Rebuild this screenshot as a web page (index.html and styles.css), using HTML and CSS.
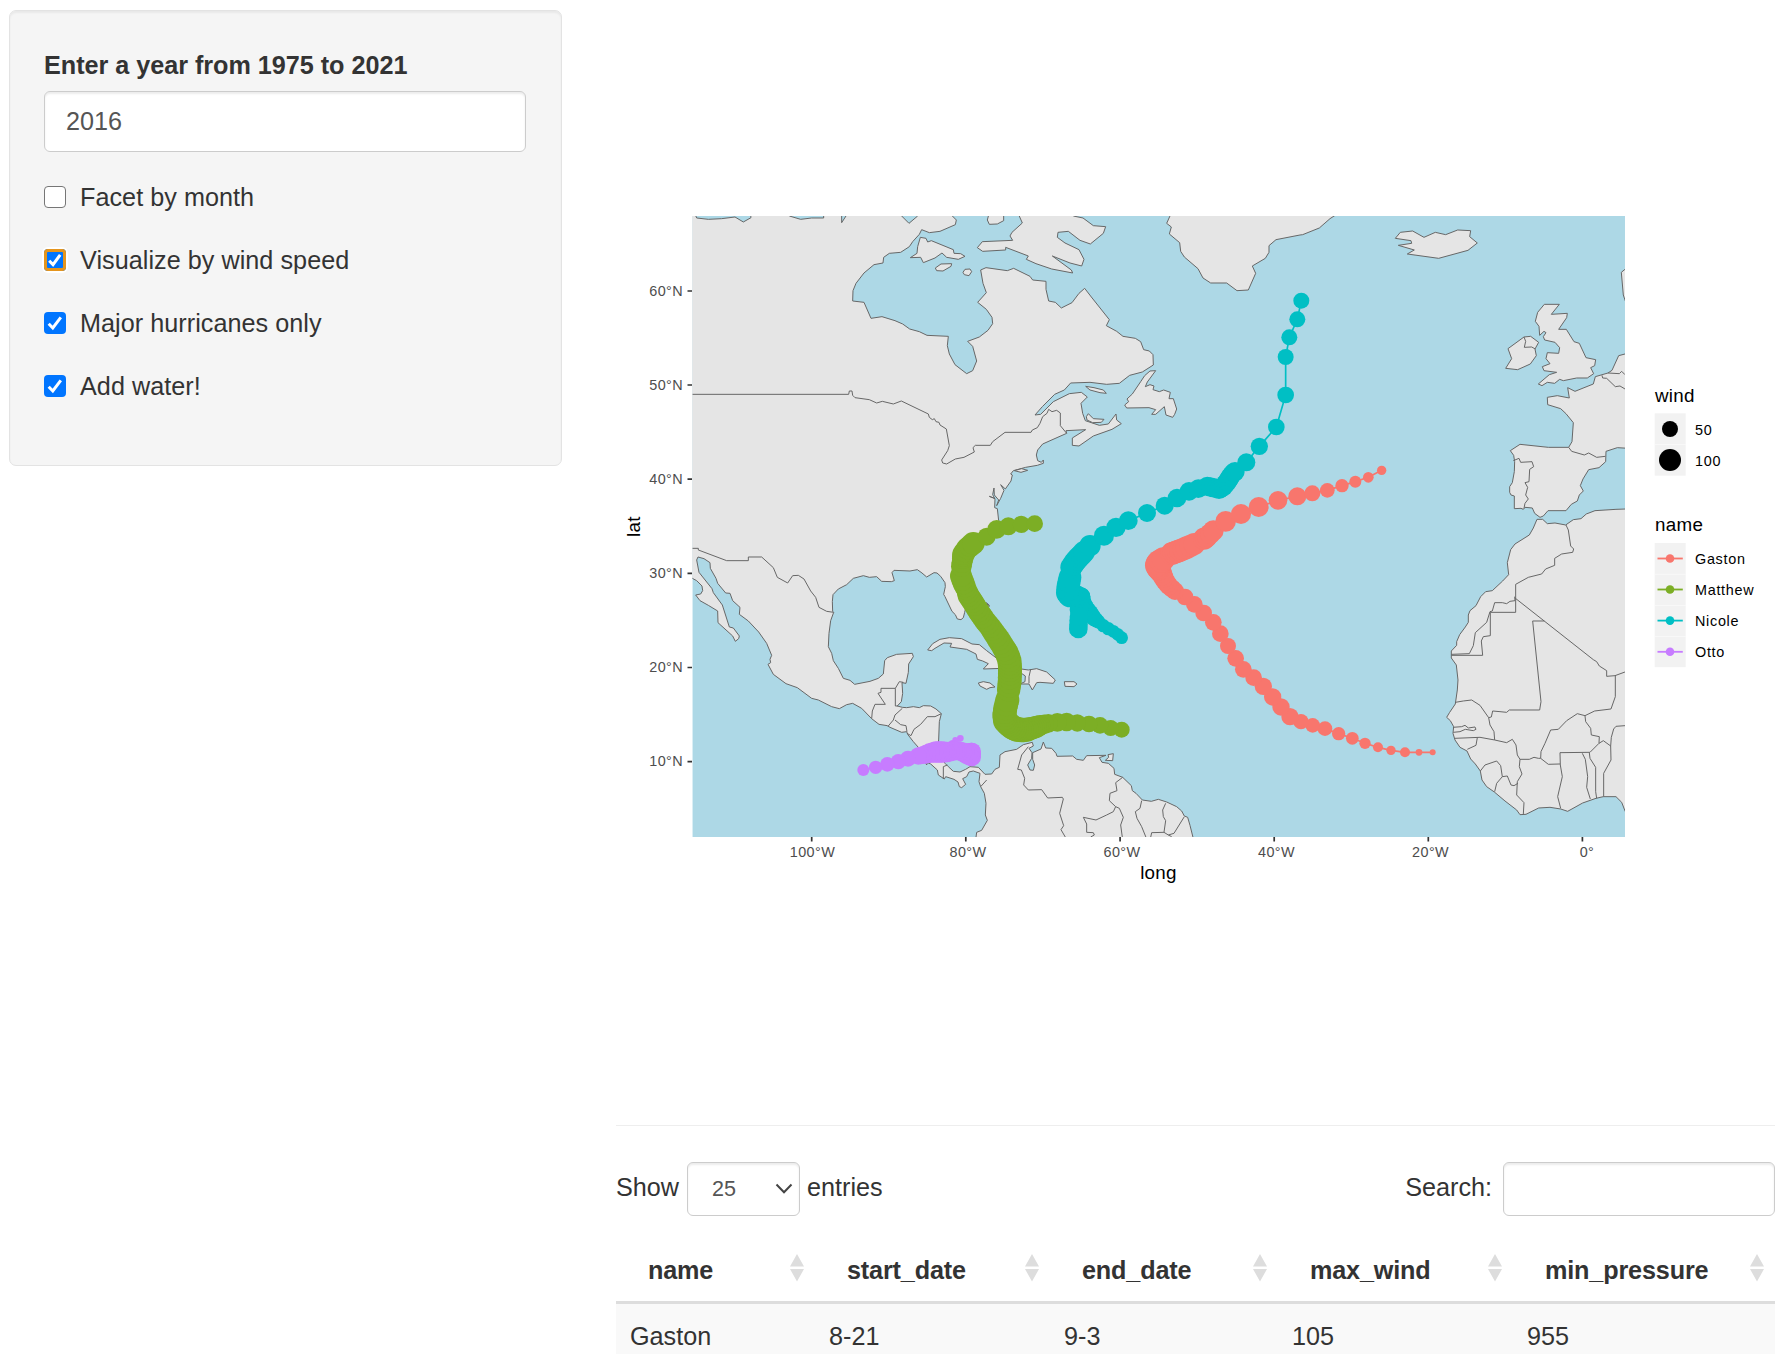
FILE: index.html
```html
<!DOCTYPE html>
<html lang="en">
<head>
<meta charset="utf-8">
<title>Atlantic storms</title>
<link rel="stylesheet" href="styles.css">
</head>
<body>
<div class="layout">
  <aside class="sidebar">
    <form class="well">
      <label class="field-label" for="year">Enter a year from 1975 to 2021</label>
      <input class="control year" id="year" type="text" value="2016">
      <label class="check"><span class="box"></span><span>Facet by month</span></label>
      <label class="check"><span class="box checked focused"><svg viewBox="0 0 22 22"><path d="M5.2 11.8 9 15.6 16.2 5.8"/></svg></span><span>Visualize by wind speed</span></label>
      <label class="check"><span class="box checked"><svg viewBox="0 0 22 22"><path d="M4.7 11.8 8.8 16 16.8 5.4"/></svg></span><span>Major hurricanes only</span></label>
      <label class="check"><span class="box checked"><svg viewBox="0 0 22 22"><path d="M4.7 11.8 8.8 16 16.8 5.4"/></svg></span><span>Add water!</span></label>
    </form>
  </aside>
  <main class="main">
    <svg class="plot" viewBox="616 10 1159 1079">
      <defs><clipPath id="panel"><rect x="37" y="48" width="2798" height="1863"/></clipPath></defs>
      <g transform="translate(680 200) scale(.33333)">
        <g clip-path="url(#panel)">
          <rect class="water" x="37" y="48" width="2798" height="1863"/>
          <g class="land">
            <!-- Americas -->
            <path d="M-30 30H40L50 54 85 58 125 56 165 51 190 66 213 53 210 30H328V48L362 58 395 54H431V30H485V68L498 48V30H665V48L687 70 713 48V30H810L817 48 829 60 826 74 780 94 748 98 725 89 718 103 698 125 688 140 662 157 628 160 611 172 609 189 582 194 552 219 528 250 519 272 518 303 552 307 573 355 606 350 645 362 668 372 689 387 718 395 741 406 805 409 802 437 808 462 825 494 860 521 878 512 890 483 878 439 863 424 898 411 924 391 938 371 936 352 919 328 893 307 919 278 909 250 902 210 918 203 982 212 1001 205 1050 229 1058 240 1098 244V268L1106 303 1126 307 1144 324 1176 308 1197 280 1214 265 1234 291 1288 359 1279 377 1310 394 1329 409 1366 415 1382 425 1391 449 1408 453 1419 464 1420 495 1387 516 1349 526 1318 550 1280 553 1230 547 1172 549 1153 570 1124 583 1087 620 1065 645 1082 643 1120 605 1168 581 1204 577 1222 591 1203 610 1208 640 1216 662 1258 676 1285 672 1308 642 1310 660 1324 671 1296 688 1240 708 1197 738 1177 736V714L1217 689 1158 692 1160 700 1088 732 1073 750 1069 765 1073 782 1084 787 1090 780V790L1072 796 1037 802 1000 812 992 822 997 825 993 843 976 867 962 854 972 871 962 895 950 917 956 900 943 885 942 864 938 884 944 895 928 889 945 896 944 923 952 926 956 962 925 1000 880 1030 845 1070 830 1120 845 1180 858 1220 854 1237 850 1253 843 1259 832 1257 826 1244 816 1234 795 1190 791 1183 796 1160 795 1148 782 1129 771 1119 762 1118 740 1131 726 1119 712 1109 690 1113 642 1111 636 1118 643 1142 634 1145 605 1144 590 1130 568 1132 550 1127 520 1135 500 1154 475 1167 459 1184 457 1205 458 1234 461 1237 452 1262 447 1300 445 1340 455 1360 460 1382 475 1405 490 1435 510 1441 524 1453 570 1444 595 1435 610 1422 614 1382 622 1373 650 1363 697 1360 700 1370 686 1392 685 1417 678 1450 666 1448 668 1480 664 1505 652 1518 667 1522 680 1523 700 1520 718 1523 730 1517 752 1518 768 1527 784 1541 778 1565 776 1620 772 1650 795 1690 805 1700 820 1714 840 1716 857 1708 870 1700 895 1702 915 1723 935 1722 945 1708 958 1702 960 1665 975 1655 1010 1648 1030 1634 1057 1627 1060 1638 1047 1645 1056 1658 1055 1675 1043 1695 1050 1710 1060 1711 1064 1695 1058 1678V1658L1083 1647 1090 1626 1097 1644 1115 1645 1128 1660 1131 1669 1178 1668 1190 1678 1210 1681 1220 1667 1278 1666 1258 1673 1266 1687 1285 1690 1302 1705 1304 1723 1328 1732 1354 1757 1357 1772 1368 1780 1387 1800 1414 1804 1435 1798 1460 1806 1490 1820 1505 1833 1513 1848 1523 1852 1530 1876 1539 1912V1950H888V1912L890 1897 905 1891 922 1861 916 1845 918 1810 913 1780 902 1760 897 1745 900 1720 880 1713 867 1716 860 1730 848 1736 857 1753 845 1763 838 1760 834 1746 822 1738 797 1730 793 1737 775 1725 772 1710 752 1692 742 1688 740 1695 725 1665 715 1642 700 1625 683 1603 680 1595 665 1597 630 1582 622 1577 597 1573 575 1556 545 1525 518 1510 500 1514 478 1526 455 1520 415 1500 395 1495 352 1463 318 1451 280 1423 264 1393 272 1388 270 1378 275 1366 260 1330 236 1296 205 1263 178 1243 180 1222 158 1202 150 1180 137 1179 113 1150 108 1135 91 1105 90 1088 72 1076 54 1071 50 1080 57 1117 96 1166 100 1178 127 1215 148 1281 160 1284 178 1308 176 1316 166 1324 158 1308 114 1268 113 1233 85 1216 60 1202 47 1185 62 1182 68 1172 66 1158 50 1142 37 1135-30 1110Z"/>
            <!-- Arctic islands and Baffin -->
            <path d="M721 112 738 115 743 126 754 122 820 149 822 160 842 161 855 169 835 178 800 172 786 159 765 174 730 188 722 172 691 173 711 160 713 140ZM783 192 815 191 813 199 789 213 770 212 766 204ZM855 208 870 207 875 215 867 227 853 224 849 217ZM930 30 922 60 928 73 952 72 971 62V30ZM1010 30 1027 69 996 97 990 108 998 121 907 125 892 143 908 154 977 150V142L1045 168 1039 178 1068 191 1115 207 1178 219 1174 210 1117 168 1170 189 1205 198 1212 178 1197 149 1155 129 1132 112 1134 97 1165 94 1200 121 1231 132 1270 100 1277 80 1240 77 1209 54 1180 48V30Z"/>
            <!-- Greenland and Iceland -->
            <path d="M1478 30 1460 70 1474 81 1468 102 1499 128 1502 154 1513 171 1554 206 1569 234 1592 249H1640L1671 272 1705 270 1727 220 1717 198 1756 175 1767 157V137L1788 119 1860 105 1868 104 1918 84 1950 56 1990 30ZM2146 115 2161 97 2198 93 2232 112 2266 97 2297 104 2333 90 2372 92 2369 110 2392 129 2364 151 2276 175 2182 162 2203 150 2155 136 2195 130 2193 122Z"/>
            <!-- Newfoundland and gulf islands -->
            <path d="M1427 512 1410 513 1394 527 1382 545 1357 582 1341 597 1346 605 1334 615 1340 624 1407 623 1427 629 1415 643 1427 643 1453 620 1458 645 1478 652 1484 643 1490 627 1480 596 1467 596 1471 577 1451 570 1438 575 1419 569 1422 558 1410 554 1396 560 1402 546ZM1217 559 1242 563 1270 570 1279 580 1260 578 1230 570ZM1225 641 1240 656 1272 658 1264 667 1238 668 1221 660 1219 650ZM1003 812 1025 806 1043 811 1023 817Z"/>
            <!-- Caribbean -->
            <path d="M743 1350 758 1331 780 1318 808 1313 845 1316 876 1332 898 1334 920 1352 945 1371 965 1387 970 1405 910 1407 925 1391 908 1383 892 1378 888 1362 860 1348 810 1341 815 1330 792 1329 765 1345 755 1352ZM895 1449 910 1445 930 1449 945 1461 930 1463 920 1468 900 1458ZM1010 1405 1045 1410 1070 1406 1100 1416 1126 1440 1120 1450 1080 1447 1070 1448 1057 1470 1047 1452 1020 1452 1035 1445 1036 1428 1020 1417ZM1153 1445H1182L1191 1452 1182 1460 1155 1459ZM1300 1661 1298 1682 1276 1681 1286 1672 1284 1664ZM919 1208 928 1216 927 1220Z"/>
            <!-- Europe -->
            <path d="M2593 313H2638L2614 343 2662 340 2660 353 2636 388H2659L2682 425 2698 430 2718 473 2747 479 2744 497 2732 503 2741 521 2722 534 2690 534 2650 542 2639 538 2624 550 2602 547 2586 557 2575 552 2608 524 2630 517 2592 512 2587 500 2610 491 2598 476 2602 458 2636 460 2639 443 2625 427 2594 420 2590 410 2598 398 2592 394 2579 406 2577 379 2566 364 2573 337ZM2532 411 2552 409 2576 427 2565 447 2569 467 2551 492 2513 509 2477 505 2495 476 2484 446ZM2850 195 2835 208 2824 217 2830 285 2845 330H2890V195Z"/>
            <path d="M2860 455 2835 462 2816 467 2796 511 2784 519 2746 530 2740 552 2685 574 2663 563 2668 594 2632 587 2602 592 2603 614 2642 626 2658 641 2680 668 2676 725 2666 742 2605 742 2520 733 2491 752 2501 766 2504 785 2503 815 2497 848 2489 860V877L2493 885 2503 888V926L2523 925 2530 928 2535 922 2557 924 2564 940 2580 952 2590 948 2604 932 2658 932 2674 913 2692 903 2698 885 2710 873 2701 857 2709 837 2726 809 2757 803 2777 785 2778 754 2812 743 2880 747V455Z"/>
            <!-- Africa -->
            <path d="M2870 926 2808 928 2745 932 2719 942 2703 956 2680 959 2657 975 2625 969 2602 971 2588 958H2571L2560 984 2548 1005 2505 1032 2492 1049 2482 1088 2486 1124 2468 1143 2437 1172 2417 1175 2402 1190 2388 1217 2370 1232 2365 1245 2365 1267 2356 1281 2339 1304 2330 1325 2330 1336 2314 1353 2314 1374 2329 1395 2334 1440 2332 1470 2326 1512 2309 1537 2300 1552 2311 1562 2321 1580 2319 1600 2325 1620 2340 1642 2361 1653 2372 1677 2386 1692 2401 1713 2406 1740 2420 1760 2443 1776 2475 1803 2510 1830 2520 1844 2538 1843 2576 1824 2610 1822 2642 1827 2663 1834 2708 1809 2748 1795 2770 1790H2808L2825 1807 2836 1835 2880 1860V926Z"/>
            <!-- Borders -->
            <g class="border">
              <path d="M37 583H506L508 573H516L518 586 525 593 568 599 590 609 607 604 640 612 664 603 745 642 748 652 757 659 763 656 768 665 777 667 780 675 799 687 808 737 803 752 785 780 788 789 800 792 826 777 852 772 883 756 879 743 886 736H931L938 725 975 697H1053L1057 690 1072 683 1080 670 1088 650 1101 640 1106 628 1116 635 1130 631 1141 639V677L1160 700M37 1045H55V1050L140 1082H205V1071H245L280 1103 292 1132 323 1149 338 1127 355 1126 372 1137 392 1173 407 1192 417 1222 440 1234 461 1237"/>
              <path d="M575 1556 577 1533 585 1513H616L594 1480 603 1477V1465H646V1518H654M646 1465 658 1445 670 1447M667 1525 645 1545 640 1560 624 1579M645 1560 662 1574 678 1577 681 1595M681 1600 693 1607 702 1588 722 1573 742 1550 765 1550 784 1541M790 1737V1700L802 1695M902 1760 920 1740M1045 1640 1025 1665 1013 1708 1024 1710 1034 1735 1031 1755 1045 1770 1085 1769 1103 1794 1147 1792 1150 1797 1139 1840 1151 1877 1143 1889 1157 1913M1328 1732 1307 1748 1311 1772 1290 1780 1288 1802 1307 1820 1300 1835 1280 1845 1248 1860 1210 1852 1220 1872V1897L1240 1898 1243 1905 1232 1911M1307 1820 1318 1825 1330 1852 1322 1875 1327 1912M1385 1802 1380 1825 1366 1835 1371 1855 1385 1880 1398 1912M1457 1810 1448 1830 1450 1850 1457 1862 1452 1897 1465 1905 1482 1900 1513 1850M1452 1897 1415 1898 1412 1912M1465 1905 1475 1910M1052 1408 1047 1430 1047 1450"/>
              <path d="M2532 411 2537 424 2533 442 2555 441 2566 447M2784 519 2818 521 2825 514 2835 524M2766 526 2768 534 2780 535 2806 560 2820 558 2835 567M2666 742 2675 754 2713 765 2726 759 2750 772 2776 769M2500 782 2517 775 2522 787 2556 785 2561 800 2549 808 2547 845 2535 848 2543 862 2537 885 2545 897 2535 910 2532 925M2658 975 2665 990 2672 1038 2681 1047 2678 1057 2645 1062 2624 1075 2624 1096 2597 1107 2585 1122 2545 1132 2507 1153V1237H2431V1307L2410 1310 2404 1323 2408 1366H2314M2314 1363 2368 1361 2380 1337 2386 1298 2420 1267 2430 1235 2437 1233 2444 1208H2467L2480 1211 2490 1204 2505 1202 2504 1190M2505 1194 2740 1379 2750 1385 2758 1398 2780 1412V1429L2805 1427 2835 1416M2593 1263H2558L2583 1505 2579 1530H2488L2480 1537 2460 1535 2438 1533 2434 1551 2426 1553 2400 1516 2375 1500 2350 1503 2326 1507M2806 1427V1490L2793 1527 2744 1533 2715 1547 2692 1541 2660 1562 2635 1588 2612 1590 2595 1630 2583 1655 2582 1675 2605 1693 2640 1692M2715 1547 2717 1565 2732 1585 2734 1605 2758 1610 2757 1630 2770 1622 2792 1638 2794 1612 2801 1587 2808 1579 2835 1577M2757 1630 2730 1657 2640 1658 2641 1695 2647 1730 2633 1790 2642 1825M2707 1660 2716 1678 2723 1730 2720 1762 2731 1797M2728 1658 2730 1675 2747 1702V1775L2750 1795M2792 1638 2793 1680 2771 1720V1790M2426 1553 2430 1575 2442 1595 2444 1620 2480 1628 2497 1618 2508 1635 2512 1665 2520 1678 2548 1678 2562 1672 2575 1675 2582 1675M2520 1678 2518 1700 2526 1722 2512 1745 2510 1785 2532 1808 2530 1843M2444 1620 2400 1612 2325 1615M2392 1613 2388 1636 2362 1648M2401 1713 2415 1695 2450 1683 2462 1697 2467 1730 2482 1728 2493 1755 2502 1757 2514 1750M2467 1730 2450 1750 2444 1775M2319 1582 2345 1580 2355 1576 2365 1584 2385 1581 2388 1588 2380 1592 2356 1588 2340 1595 2320 1597"/>
            </g>
          </g>
          <g id="tracks"></g>
        </g>
      </g>
      <g class="tick">
        <path d="M687.500 291H692M687.500 385H692M687.500 479.200H692M687.500 573.300H692M687.500 667.500H692M687.500 761.600H692M811.700 837V841.500M965.800 837V841.500M1120.100 837V841.500M1274.200 837V841.500M1428.300 837V841.500M1582.400 837V841.500"/>
      </g>
      <g class="tick-label end">
        <text x="683" y="296">60°N</text><text x="683" y="390">50°N</text><text x="683" y="484">40°N</text><text x="683" y="578">30°N</text><text x="683" y="672">20°N</text><text x="683" y="766">10°N</text>
      </g>
      <g class="tick-label middle">
        <text x="812.500" y="856.500">100°W</text><text x="968" y="856.500">80°W</text><text x="1122" y="856.500">60°W</text><text x="1276.500" y="856.500">40°W</text><text x="1430.600" y="856.500">20°W</text><text x="1587" y="856.500">0°</text>
      </g>
      <text class="axis-title middle" x="1158.500" y="879">long</text>
      <text class="axis-title middle" transform="translate(639.500 526.500) rotate(-90)">lat</text>
      <g class="legend">
        <text class="axis-title" x="1655" y="401.500">wind</text>
        <rect x="1654.700" y="413.300" width="31" height="62.400"/>
        <path class="key-gap" d="M1654.700 444.500h31"/>
        <circle cx="1670" cy="429" r="8"/><circle cx="1670" cy="460" r="11"/>
        <g class="legend-label"><text x="1695" y="434.500">50</text><text x="1695" y="465.500">100</text></g>
        <text class="axis-title" x="1655" y="530.500">name</text>
        <rect x="1654.700" y="543" width="31" height="124.200"/>
        <path class="key-gap" d="M1654.700 574.300h31M1654.700 605.400h31M1654.700 636.500h31"/>
        <g class="gaston"><path d="M1657.500 558.500h25.300"/><circle cx="1670" cy="558.500" r="4.300"/></g>
        <g class="matthew"><path d="M1657.500 589.500h25.300"/><circle cx="1670" cy="589.500" r="4.300"/></g>
        <g class="nicole"><path d="M1657.500 620.600h25.300"/><circle cx="1670" cy="620.600" r="4.300"/></g>
        <g class="otto"><path d="M1657.500 651.800h25.300"/><circle cx="1670" cy="651.800" r="4.300"/></g>
        <g class="legend-label"><text x="1695" y="563.500">Gaston</text><text x="1695" y="594.500">Matthew</text><text x="1695" y="625.500">Nicole</text><text x="1695" y="656.500">Otto</text></g>
      </g>
    </svg>
    <hr class="rule">
    <div class="toolbar">
      <div class="length"><span>Show</span><span class="control select"><span>25</span><svg viewBox="0 0 18 11"><path d="M1.500 1.500 9 9.300 16.500 1.500"/></svg></span><span>entries</span></div>
      <label class="search"><span>Search:</span><input class="control" type="text"></label>
    </div>
    <table class="data">
      <colgroup><col class="c1"><col class="c2"><col class="c3"><col class="c4"><col class="c5"></colgroup>
      <thead><tr>
        <th><div>name<svg viewBox="0 0 14 28"><path d="M7 0 14 12.500H0ZM0 15H14L7 27.500Z"/></svg></div></th>
        <th><div>start_date<svg viewBox="0 0 14 28"><path d="M7 0 14 12.500H0ZM0 15H14L7 27.500Z"/></svg></div></th>
        <th><div>end_date<svg viewBox="0 0 14 28"><path d="M7 0 14 12.500H0ZM0 15H14L7 27.500Z"/></svg></div></th>
        <th><div>max_wind<svg viewBox="0 0 14 28"><path d="M7 0 14 12.500H0ZM0 15H14L7 27.500Z"/></svg></div></th>
        <th><div>min_pressure<svg viewBox="0 0 14 28"><path d="M7 0 14 12.500H0ZM0 15H14L7 27.500Z"/></svg></div></th>
      </tr></thead>
      <tbody><tr><td>Gaston</td><td>8-21</td><td>9-3</td><td>105</td><td>955</td></tr></tbody>
    </table>
  </main>
</div>
<script src="tracks.js"></script>
</body>
</html>
```
FILE: styles.css
```css
* { box-sizing: border-box; }
body { margin: 0; height: 1354px; overflow: hidden; background: #fff; color: #333; font: 25.2px/36px "Liberation Sans", Arial, sans-serif; }
.layout { display: flex; gap: 54px; padding: 10px 13px 0 9px; }
.sidebar { width: 553px; flex: none; }
.well { height: 456px; padding: 36px 34px; background: #f5f5f5; border: 1.500px solid #e3e3e3; border-radius: 7px; box-shadow: inset 0 2px 2px rgba(0,0,0,.05); }
.field-label { display: block; font-weight: 700; margin-bottom: 8px; white-space: nowrap; letter-spacing: -.02px; }
.control { display: block; height: 54px; background: #fff; border: 1.500px solid #ccc; border-radius: 6px; box-shadow: inset 0 2px 2px rgba(0,0,0,.075); color: #555; font: inherit; }
.year { width: 482px; height: 61px; padding: 0 21px; margin-bottom: 27px; }
.check { display: flex; align-items: center; gap: 14px; height: 36px; margin-bottom: 27px; letter-spacing: .04px; }
.box { width: 22px; height: 22px; flex: none; border: 1.500px solid #767676; border-radius: 4px; background: #fff; }
.checked { border: 0; background: #0075ff; }
.checked svg { display: block; width: 22px; height: 22px; fill: none; stroke: #fff; stroke-width: 3; }
.focused { box-shadow: inset 0 0 0 3px #e5951d, 0 0 0 2px #fff; }
.main { width: 1159px; flex: none; }
.plot { display: block; width: 1159px; height: 1079px; font-family: "Liberation Sans", Arial, sans-serif; }
.water { fill: #add8e6; }
.land { fill: #e5e5e5; stroke: #666; stroke-width: 3; stroke-linejoin: round; }
.border { fill: none; }
.tick { stroke: #333; stroke-width: 1.700; }
.tick-label { fill: #4d4d4d; font-size: 14.400px; letter-spacing: .4px; }
.end { text-anchor: end; }
.middle { text-anchor: middle; }
.axis-title { font-size: 18.800px; letter-spacing: .3px; fill: #000; }
.legend rect { fill: #f2f2f2; }
.legend-label { font-size: 14.400px; letter-spacing: .7px; }
.key-gap { stroke: #fff; stroke-width: .5; }
.gaston { fill: #f8766d; stroke: #f8766d; }
.matthew { fill: #7cae25; stroke: #7cae25; }
.nicole { fill: #00bfc4; stroke: #00bfc4; }
.otto { fill: #c77cff; stroke: #c77cff; }
.legend g path { stroke-width: 1.800; }
.legend circle, #tracks circle { stroke: none; }
#tracks polyline { fill: none; stroke-width: 5; }
.rule { margin: 36px 0 0; border: 0; border-top: 1.500px solid #eee; }
.toolbar { display: flex; justify-content: space-between; margin-top: 36px; height: 54px; }
.length, .search { display: flex; line-height: 51px; }
.select { display: flex; justify-content: space-between; align-items: center; width: 113px; margin: 0 7px 0 8px; padding: 0 6px 1px 24px; font-size: 21.600px; }
.select svg { width: 18px; height: 11px; fill: none; stroke: #444; stroke-width: 2; }
.search .control { width: 272px; margin-left: 11px; }
.data { width: 1159px; margin-top: 27px; border-collapse: separate; border-spacing: 0; table-layout: fixed; }
.c1 { width: 199px; }
.c2, .c4 { width: 235px; }
.c3 { width: 228px; }
.c5 { width: 262px; }
th { height: 61px; padding: 0 11px 5px 32px; border-bottom: 3px solid #ddd; text-align: left; letter-spacing: -.15px; }
th div { display: flex; justify-content: space-between; align-items: center; }
th svg { width: 14px; height: 28px; fill: #ddd; margin-top: -4px; }
td { height: 64px; padding: 0 14px; background: #f9f9f9; }
```
FILE: tracks.js
```js
// Each storm is a list of x, y, radius triples in panel units.
const storms = {
  gaston: [2258,1657,9, 2217,1657,10, 2175,1657,15, 2133,1651,14, 2094,1642,15, 2055,1630,17, 2017,1615,19, 1976,1601,20, 1935,1586,22, 1898,1576,22, 1863,1565,23, 1830,1550,26, 1803,1521,26, 1778,1491,26, 1750,1459,26, 1721,1433,25, 1690,1408,25, 1667,1375,25, 1644,1338,24, 1621,1301,25, 1600,1267,25, 1571,1239,25, 1543,1213,25, 1515,1191,25, 1485,1173,27, 1467,1158,28, 1455,1142,29, 1447,1125,31, 1436,1106,35, 1433,1096,38, 1436,1088,37, 1450,1077,35, 1475,1061,34, 1488,1056,34, 1502,1051,34, 1520,1043,34, 1543,1032,33, 1572,1016,33, 1582,1010,31, 1600,992,31, 1637,964,31, 1683,942,30, 1736,921,30, 1794,901,28, 1852,889,27, 1897,880,24, 1942,871,22, 1986,857,20, 2026,845,18, 2065,832,16, 2105,811,14],
  matthew: [1325,1589,24, 1292,1584,24, 1260,1576,25, 1227,1572,25, 1192,1569,26, 1160,1566,28, 1132,1567,28, 1105,1570,28, 1080,1576,31, 1068,1581,33, 1055,1585,34, 1040,1589,36, 1025,1590,37, 1010,1588,37, 997,1582,37, 985,1572,37, 976,1562,37, 973,1545,36, 976,1525,36, 982,1500,36, 986,1470,35, 989,1445,36, 990,1420,36, 990,1400,36, 988,1380,36, 980,1358,36, 968,1338,35, 955,1317,35, 942,1298,34, 930,1280,33, 915,1262,33, 901,1242,33, 890,1225,33, 878,1205,33, 866,1187,33, 860,1170,31, 851,1150,33, 843,1128,33, 844,1100,31, 848,1075,32, 850,1062,33, 862,1045,33, 880,1030,34, 920,1010,27, 950,988,28, 985,979,27, 1024,973,26, 1064,971,25],
  nicole: [1325,1313,19, 1313,1303,19, 1300,1294,19, 1285,1286,20, 1270,1277,20, 1255,1265,21, 1242,1255,24, 1230,1240,26, 1218,1225,26, 1208,1210,27, 1203,1190,28, 1203,1205,28, 1197,1230,28, 1196,1262,28, 1195,1287,28, 1197,1250,28, 1203,1190,28, 1180,1185,34, 1170,1187,35, 1163,1178,35, 1165,1157,35, 1170,1132,34, 1174,1102,33, 1185,1085,33, 1197,1072,33, 1212,1056,33, 1230,1037,32, 1272,1007,30, 1308,982,29, 1345,962,28, 1401,939,27, 1454,917,27, 1491,894,28, 1527,874,28, 1555,866,28, 1582,859,29, 1600,863,29, 1617,868,29, 1630,860,29, 1642,845,29, 1650,832,29, 1658,820,28, 1665,815,29, 1699,787,27, 1738,739,26, 1789,681,25, 1817,585,25, 1817,471,24, 1828,412,24, 1852,358,24, 1864,302,24],
  otto: [841,1615,10, 826,1620,9, 818,1632,12, 835,1650,26, 858,1659,28, 873,1655,27, 876,1655,27, 875,1671,28, 862,1662,31, 848,1656,29, 832,1651,28, 820,1653,29, 800,1656,31, 785,1656,32, 768,1656,32, 750,1659,30, 730,1665,27, 715,1668,26, 684,1676,24, 655,1685,23, 622,1693,22, 587,1702,20, 550,1710,18]
};
const ns = "http://www.w3.org/2000/svg";
const host = document.getElementById("tracks");
function addDot(group, x, y, r) {
  const dot = document.createElementNS(ns, "circle");
  dot.setAttribute("cx", x);
  dot.setAttribute("cy", y);
  dot.setAttribute("r", r);
  group.append(dot);
}
for (const [name, data] of Object.entries(storms)) {
  const group = document.createElementNS(ns, "g");
  const line = document.createElementNS(ns, "polyline");
  const points = [];
  group.setAttribute("class", name);
  group.append(line);
  for (let i = 0; i < data.length; i += 3) {
    const [x, y, r, x2, y2, r2] = data.slice(i, i + 6);
    points.push(x + "," + y);
    addDot(group, x, y, r);
    // Slow-moving stretches have readings close enough to merge.
    if (Math.hypot(x2 - x, y2 - y) < 26 && r > 20) addDot(group, (x + x2) / 2, (y + y2) / 2, (r + r2) / 2);
  }
  line.setAttribute("points", points.join(" "));
  host.append(group);
}
```
